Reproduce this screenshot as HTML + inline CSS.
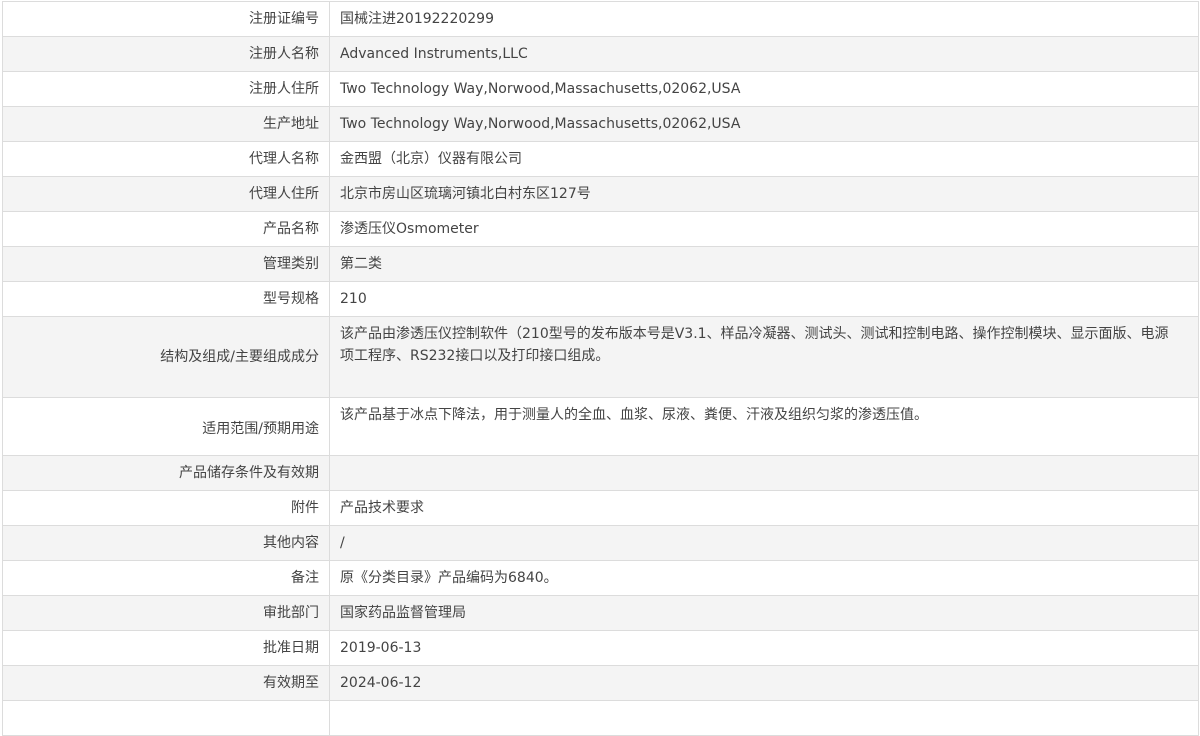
<!DOCTYPE html>
<html><head><meta charset="utf-8"><style>
body{margin:0;background:#fff;width:1200px;height:703px;overflow:hidden;font-family:"DejaVu Sans","Noto Sans CJK SC",sans-serif;font-size:14px;color:#444}
table{position:absolute;left:2px;top:1px;width:1197px;border-collapse:collapse;table-layout:fixed}
td{border:1px solid #dcdcdc;padding:0 10px;height:34px;line-height:22px}
td.l{width:306px;text-align:right;vertical-align:middle}
td.v{vertical-align:middle}
tr:nth-child(even){background:#f4f4f4}
td.t{vertical-align:top;padding-top:6px}
</style></head><body>
<table>
<tr><td class="l">注册证编号</td><td class="v">国械注进20192220299</td></tr>
<tr><td class="l">注册人名称</td><td class="v">Advanced Instruments,LLC</td></tr>
<tr><td class="l">注册人住所</td><td class="v">Two Technology Way,Norwood,Massachusetts,02062,USA</td></tr>
<tr><td class="l">生产地址</td><td class="v">Two Technology Way,Norwood,Massachusetts,02062,USA</td></tr>
<tr><td class="l">代理人名称</td><td class="v">金西盟（北京）仪器有限公司</td></tr>
<tr><td class="l">代理人住所</td><td class="v">北京市房山区琉璃河镇北白村东区127号</td></tr>
<tr><td class="l">产品名称</td><td class="v">渗透压仪Osmometer</td></tr>
<tr><td class="l">管理类别</td><td class="v">第二类</td></tr>
<tr><td class="l">型号规格</td><td class="v">210</td></tr>
<tr><td class="l" style="height:80px">结构及组成/主要组成成分</td><td class="v t">该产品由渗透压仪控制软件（210型号的发布版本号是V3.1、样品冷凝器、测试头、测试和控制电路、操作控制模块、显示面版、电源<br>项工程序、RS232接口以及打印接口组成。</td></tr>
<tr><td class="l" style="height:52px;padding-top:5px">适用范围/预期用途</td><td class="v t">该产品基于冰点下降法，用于测量人的全血、血浆、尿液、粪便、汗液及组织匀浆的渗透压值。</td></tr>
<tr><td class="l">产品储存条件及有效期</td><td class="v"></td></tr>
<tr><td class="l">附件</td><td class="v">产品技术要求</td></tr>
<tr><td class="l">其他内容</td><td class="v">/</td></tr>
<tr><td class="l">备注</td><td class="v">原《分类目录》产品编码为6840。</td></tr>
<tr><td class="l">审批部门</td><td class="v">国家药品监督管理局</td></tr>
<tr><td class="l">批准日期</td><td class="v">2019-06-13</td></tr>
<tr><td class="l">有效期至</td><td class="v">2024-06-12</td></tr>
<tr><td class="l"></td><td class="v"></td></tr>
</table>
</body></html>
